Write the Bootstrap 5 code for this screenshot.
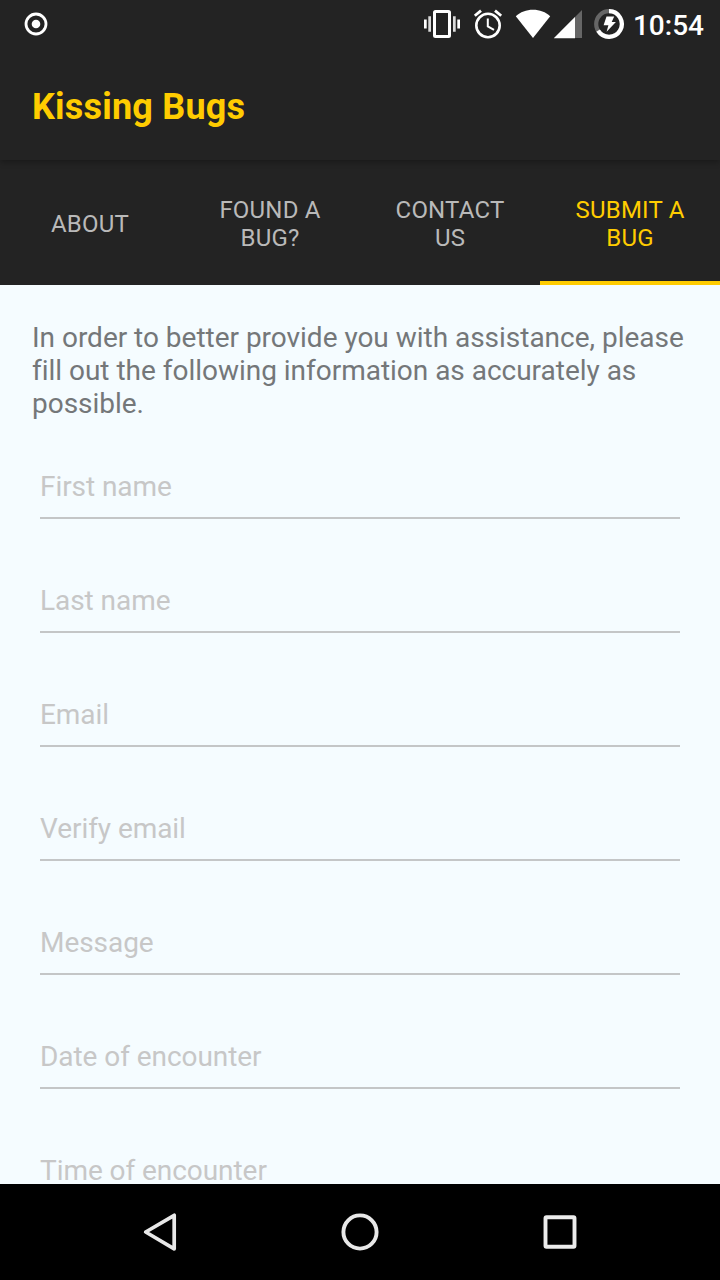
<!DOCTYPE html>
<html lang="en">
<head>
<meta charset="utf-8">
<meta name="viewport" content="width=device-width, initial-scale=1">
<title>Kissing Bugs</title>
<link href="https://cdn.jsdelivr.net/npm/bootstrap@5.3.0/dist/css/bootstrap.min.css" rel="stylesheet">
<style>
  body { font-family: Roboto, "Liberation Sans", sans-serif; background: #f5fcff; height: 1280px; }
  .bar-dark { background: #232323; }
  .status-bar { height: 48px; padding: 0 16px 0 24px; z-index: 2; }
  .clock { font-size: 28px; line-height: 33px; font-weight: 500; margin: 2px 0 0 8px; }
  .app-bar { height: 112px; padding: 5px 32px 0; box-shadow: 0 2px 6px rgba(0,0,0,.3); z-index: 1; }
  .app-title { font-size: 36px; line-height: 42px; font-weight: 700; letter-spacing: .2px; color: #fc0; }
  .tabs { height: 125px; }
  .tabs .nav-link { font-size: 24px; line-height: 28px; letter-spacing: .2px; color: #b9b9b9; padding: 7px 24px 0; border-radius: 0; border-bottom: 4px solid transparent; }
  .tabs .nav-link.active { color: #fc0; border-bottom-color: #fc0; }
  .content { padding: 36px 32px 0; }
  .intro { font-size: 28px; line-height: 33px; letter-spacing: -.02px; color: #747779; margin-bottom: 50px; }
  .fields { padding: 0 8px; gap: 65px; }
  .fields .form-control { height: 49px; flex: none; font-size: 28px; line-height: 33px; letter-spacing: -.06px; padding: 0 0 14px; border: 0; border-bottom: 2px solid #c4c6c7; border-radius: 0; background: transparent; }
  .fields .form-control::placeholder { color: #c7c7c7; opacity: 1; }
  .sys-nav { height: 96px; padding: 0 60px; }
  svg { display: block; flex: none; }
</style>
</head>
<body class="d-flex flex-column overflow-hidden">
  <header class="status-bar bar-dark d-flex align-items-center text-white flex-shrink-0 position-relative">
    <svg width="24" height="48" viewBox="24 0 24 48" fill="#fff"><circle cx="36" cy="24" r="10" fill="none" stroke="#fff" stroke-width="2.8"/><circle cx="36" cy="24" r="4.3"/></svg>
    <svg class="ms-auto" width="202" height="48" viewBox="423 0 202 48" fill="#fff">
      <!-- vibrate -->
      <path fill-rule="evenodd" d="M435.500 10h13q2.500 0 2.500 2.500v23q0 2.500-2.500 2.500h-13q-2.500 0-2.500-2.500v-23q0-2.500 2.500-2.500zM436 13v22h12v-22z"/>
      <path d="M424 19.500h2.700v9H424zM457.300 19.500h2.700v9h-2.700z"/><path fill="#dadada" d="M428.300 16.300h2.700v15.400h-2.700zM453 16.300h2.700v15.400H453z"/>
      <!-- alarm -->
      <g fill="none" stroke="#fff"><circle cx="488" cy="25.500" r="11.700" stroke-width="2.600"/><path stroke-width="2.800" d="M474.800 15.800l6.200-5.200M501.200 15.800l-6.200-5.200"/><path stroke-width="2" d="M487.800 18.500v7.800l6.200 3.600"/></g>
      <!-- wi-fi -->
      <path d="M515.800 16.200C520.300 12 526.300 9.800 533 9.800s12.700 2.200 17.200 6.400L533 38z"/>
      <!-- signal -->
      <path fill="#666" d="M582 10v28h-28z"/><path d="M575 17v21.200h-21.200z"/>
      <!-- battery -->
      <circle cx="609" cy="24" r="12.800" fill="none" stroke="#666" stroke-width="4.200"/>
      <path d="M609 11.200a12.800 12.800 0 1 1-10.900 19.500" fill="none" stroke="#fff" stroke-width="4.200"/>
      <path d="M606.500 16.500h7.700l-2.500 5.500h4.200l-9.300 9.800 1.800-6.600h-4.800z"/>
    </svg>
    <span class="clock">10:54</span>
  </header>
  <div class="app-bar bar-dark d-flex align-items-center position-relative flex-shrink-0">
    <h1 class="app-title m-0">Kissing Bugs</h1>
  </div>
  <nav class="tabs nav nav-fill bar-dark flex-nowrap flex-shrink-0 row g-0">
    <a class="nav-link col-3 d-flex align-items-center justify-content-center" href="#">ABOUT</a>
    <a class="nav-link col-3 d-flex align-items-center justify-content-center" href="#">FOUND A<br>BUG?</a>
    <a class="nav-link col-3 d-flex align-items-center justify-content-center" href="#">CONTACT<br>US</a>
    <a class="nav-link col-3 d-flex align-items-center justify-content-center active" href="#">SUBMIT A<br>BUG</a>
  </nav>
  <main class="content flex-grow-1 overflow-hidden" style="min-height:0">
    <p class="intro">In order to better provide you with assistance, please fill out the following information as accurately as possible.</p>
    <form class="fields d-flex flex-column">
      <input class="form-control" type="text" placeholder="First name">
      <input class="form-control" type="text" placeholder="Last name">
      <input class="form-control" type="text" placeholder="Email">
      <input class="form-control" type="text" placeholder="Verify email">
      <input class="form-control" type="text" placeholder="Message">
      <input class="form-control" type="text" placeholder="Date of encounter">
      <input class="form-control" type="text" placeholder="Time of encounter">
    </form>
  </main>
  <footer class="sys-nav bg-black d-flex justify-content-around align-items-center flex-shrink-0">
    <svg width="48" height="48" viewBox="136 1208 48 48" fill="none" stroke="#e8e8e8" stroke-width="3.700" stroke-linejoin="round"><path d="M174.200 1215.300v33.500L145.700 1232z"/></svg>
    <svg width="48" height="48" viewBox="336 1208 48 48" fill="none" stroke="#e8e8e8" stroke-width="3.900"><circle cx="360" cy="1232" r="16.600"/></svg>
    <svg width="48" height="48" viewBox="536 1208 48 48" fill="none" stroke="#ececec" stroke-width="3.900"><rect x="545.500" y="1217.300" width="29" height="29.400" rx="1"/></svg>
  </footer>
<script src="https://cdn.jsdelivr.net/npm/bootstrap@5.3.0/dist/js/bootstrap.bundle.min.js"></script>
</body>
</html>
